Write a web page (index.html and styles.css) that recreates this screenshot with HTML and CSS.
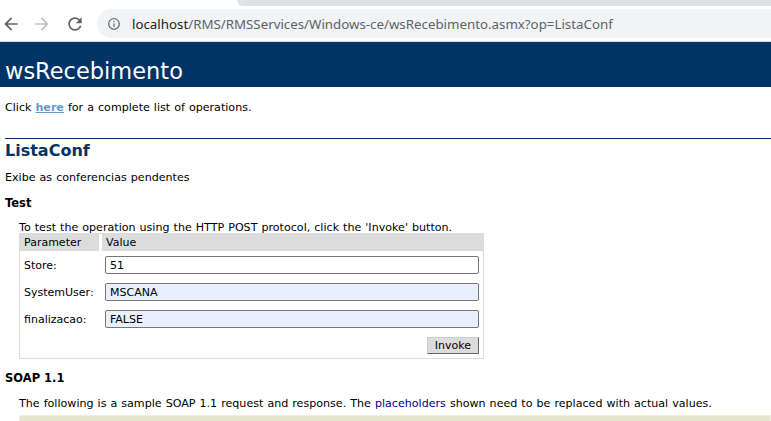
FILE: index.html
```html
<!DOCTYPE html>
<html lang="en">

<head>
  <meta charset="UTF-8">
  <title>wsRecebimento Web Service</title>
  <link rel="stylesheet" href="styles.css">
</head>

<body>

  <div class="browser">
    <div class="tabstrip">
      <div class="tab-ghost"></div>
    </div>
    <div class="toolbar">
      <svg class="nav-icon back" viewBox="0 0 24 24" width="20" height="20">
        <path d="M20 11H7.83l5.59-5.59L12 4l-8 8 8 8 1.41-1.41L7.83 13H20v-2z" />
      </svg>
      <svg class="nav-icon forward" viewBox="0 0 24 24" width="20" height="20">
        <path d="M12 4l-1.41 1.41L16.17 11H4v2h12.17l-5.58 5.59L12 20l8-8z" />
      </svg>
      <svg class="nav-icon reload" viewBox="0 0 24 24" width="20" height="20">
        <path
          d="M17.65 6.35C16.2 4.9 14.21 4 12 4c-4.42 0-7.990 3.58-7.99 8s3.57 8 7.99 8c3.73 0 6.84-2.55 7.73-6h-2.08c-.82 2.33-3.04 4-5.65 4-3.31 0-6-2.69-6-6s2.69-6 6-6c1.66 0 3.14.69 4.22 1.78L13 11h7V4l-2.35 2.35z" />
      </svg>
      <div class="omnibox">
        <svg class="info-icon" viewBox="0 0 24 24" width="14" height="14">
          <path
            d="M11 7h2v2h-2zm0 4h2v6h-2zm1-9C6.48 2 2 6.48 2 12s4.48 10 10 10 10-4.48 10-10S17.52 2 12 2zm0 18c-4.41 0-8-3.590-8-8s3.59-8 8-8 8 3.59 8 8-3.59 8-8 8z" />
        </svg>
        <span class="url"><span class="host">localhost</span>/RMS/RMSServices/Windows-ce/wsRecebimento.asmx?op=ListaConf</span>
      </div>
    </div>
  </div>

  <div class="heading1">wsRecebimento</div>

  <div id="content">

    <p class="intro">Click <a href="#">here</a> for a complete list of operations.</p>

    <h2>ListaConf</h2>
    <p class="intro">Exibe as conferencias pendentes</p>

    <h3>Test</h3>
    <p class="frmtext">To test the operation using the HTTP POST protocol, click the 'Invoke' button.</p>

    <form>
      <table class="frm">
        <colgroup>
          <col class="col-param">
          <col class="col-value">
        </colgroup>
        <tr>
          <td class="frmheader param-head">Parameter</td>
          <td class="frmheader">Value</td>
        </tr>
        <tr>
          <td>Store:</td>
          <td><input class="frmInput" type="text" name="Store" value="51"></td>
        </tr>
        <tr>
          <td>SystemUser:</td>
          <td><input class="frmInput autofill" type="text" name="SystemUser" value="MSCANA"></td>
        </tr>
        <tr>
          <td>finalizacao:</td>
          <td><input class="frmInput autofill" type="text" name="finalizacao" value="FALSE"></td>
        </tr>
        <tr>
          <td></td>
          <td class="button-cell"><button type="button" class="button">Invoke</button></td>
        </tr>
      </table>
    </form>

    <h3>SOAP 1.1</h3>
    <p>The following is a sample SOAP 1.1 request and response. The <span class="value">placeholders</span> shown need to be replaced with actual values.</p>
    <pre></pre>

  </div>

</body>

</html>
```

FILE: styles.css
```css
body {
  margin: 0;
  background-color: white;
  color: #000000;
  font-family: "DejaVu Sans", Verdana, sans-serif;
}

/* browser chrome */
.browser {
  background-color: white;
}

.tabstrip {
  height: 6px;
  display: flex;
}

.tab-ghost {
  margin-left: 237px;
  flex: 1;
  background-color: #dee1e6;
  border-bottom-left-radius: 6px;
}

.toolbar {
  height: 35px;
  display: flex;
  align-items: center;
  border-bottom: 1px solid #dadce0;
}

.nav-icon {
  fill: #5f6368;
  flex-shrink: 0;
}

.back {
  margin-left: 1px;
}

.forward {
  margin-left: 11px;
  fill: #bdc1c6;
}

.reload {
  margin-left: 13px;
}

.omnibox {
  margin-left: 12px;
  flex: 1;
  height: 29px;
  display: flex;
  align-items: center;
  background-color: #f1f3f4;
  border-radius: 15px 0 0 15px;
}

.info-icon {
  fill: #5f6368;
  margin-left: 10px;
}

.url {
  margin-left: 11px;
  font-family: "Noto Sans", "Open Sans", sans-serif;
  font-size: 13.3px;
  color: #5f6368;
  white-space: nowrap;
}

.host {
  color: #202124;
}

/* service page */
.heading1 {
  background-color: #003366;
  color: #ffffff;
  font-size: 22.5px;
  line-height: 26px;
  padding: 16px 0 3px 5px;
}

#content {
  margin-left: 19px;
  font-size: 11.1px;
  line-height: 13px;
  word-spacing: 0.5px;
}

p {
  margin: 0 0 11px;
}

.intro {
  margin-left: -14px;
}

#content > .intro:first-child {
  margin-top: 14px;
  margin-bottom: 24px;
}

a {
  color: #6699cc;
  font-weight: bold;
  text-decoration: underline;
}

h2 {
  font-size: 16px;
  line-height: 19px;
  font-weight: bold;
  color: #003366;
  border-top: 1px solid #003366;
  padding-top: 2px;
  margin: 0 0 11px -14px;
  word-spacing: 0;
}

h3 {
  font-size: 11.5px;
  line-height: 14px;
  font-weight: bold;
  margin: 0 0 11px -14px;
  word-spacing: 0;
}

p + h3 {
  margin-top: 12px;
}

form + h3 {
  margin-top: 12px;
  margin-bottom: 12px;
}

.frmtext {
  margin-bottom: -1px;
}

form {
  margin: 0;
}

.frm {
  table-layout: fixed;
  width: 465px;
  border: 1px solid #dcdcdc;
  border-spacing: 0;
  font-size: 11px;
  word-spacing: 0;
}

.col-param {
  width: 82px;
}

.frm td {
  padding: 5px 4px 4px 4px;
  vertical-align: middle;
  white-space: nowrap;
}

.frm td.frmheader {
  background-color: #dcdcdc;
  padding: 2px 4px 2px 4px;
}

.frm td.param-head {
  border-right: 3px solid #ffffff;
}

.frm td + td {
  padding-left: 3px;
}

.frmInput {
  display: block;
  box-sizing: border-box;
  width: 374px;
  height: 18px;
  margin: 0;
  padding: 0 4px;
  font-family: "DejaVu Sans", Verdana, sans-serif;
  font-size: 11px;
  color: #000000;
  background-color: #ffffff;
  border: 1px solid #767676;
  border-radius: 2px;
}

.autofill {
  background-color: #e8f0fe;
}

.button-cell {
  text-align: right;
}

.frm td.button-cell {
  padding-right: 4px;
}

.button {
  display: inline-block;
  vertical-align: top;
  margin: 0;
  padding: 0 7px;
  height: 17px;
  line-height: 15px;
  font-family: "DejaVu Sans", Verdana, sans-serif;
  font-size: 11px;
  color: #000000;
  background-color: #dcdcdc;
  border-top: 1px solid #cccccc;
  border-left: 1px solid #cccccc;
  border-bottom: 1px solid #666666;
  border-right: 1px solid #666666;
  border-radius: 0;
}

.value {
  color: #00008b;
}

pre {
  margin: -6px 0 0;
  height: 20px;
  background-color: #e5e5cc;
  border: 1px solid #f0f0e0;
}
```
